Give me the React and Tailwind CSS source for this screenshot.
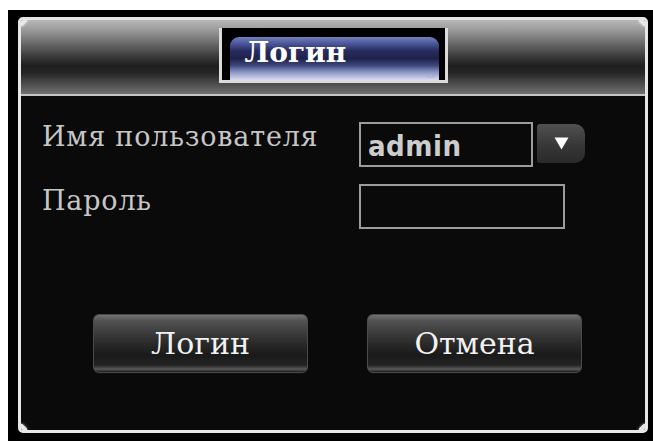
import React from "react";

const serif = { fontFamily: '"DejaVu Serif", "Liberation Serif", serif' };
const sans = { fontFamily: '"DejaVu Sans Condensed", "DejaVu Sans", "Liberation Sans", sans-serif' };

function Bolt({ className }) {
  return (
    <div
      className={`absolute w-[9px] h-[9px] rotate-45 rounded-[2px] bg-[#e8e8e8] shadow-[0_0_3px_rgba(255,255,255,0.7)] ${className}`}
    />
  );
}

function PanelButton({ children }) {
  return (
    <button
      className="w-[215px] h-[59px] rounded-[6px] border border-[#4a4a4a] text-[30px] leading-[34px] text-[#f2f2f2] bg-[linear-gradient(to_bottom,#727272_0%,#525252_10%,#2e2e2e_45%,#1a1a1a_70%,#232323_88%,#5a5a5a_95%,#1c1c1c_100%)] shadow-[0_1px_0_#111]"
      style={serif}
    >
      {children}
    </button>
  );
}

export default function App() {
  return (
    <div className="w-[653px] h-[441px] bg-white pl-[8px] pt-[10px] flex">
      <div className="flex-1 bg-black pl-[10px] pt-[7px] pr-[5px] pb-[8px] flex">
        <div className="relative flex-1 flex flex-col border-[3px] border-[#e6e6e6] rounded-[5px] overflow-hidden bg-[#0a0a0a]">
          {/* title bar */}
          <div className="h-[76px] shrink-0 flex justify-center pt-[8px] border-b-2 border-[#c4c4c4] bg-[linear-gradient(to_bottom,#b8b8b8_0%,#9e9e9e_12%,#6e6e6e_30%,#383838_50%,#1e1e1e_62%,#262626_72%,#4c4c4c_86%,#707070_100%)]">
            <div className="w-[229px] h-[55px] bg-black border-x-[3px] border-b-[3px] border-[#dcdcdc] pl-[8px] pr-[6px] pt-[9px] flex">
              <div className="relative flex-1 rounded-t-[9px] bg-[linear-gradient(to_bottom,#7280bc_0%,#4e5a9e_14%,#282c5e_32%,#1e224a_50%,#3c467a_66%,#8c96c6_82%,#d8dcee_100%)] pl-[15px] pt-[1px]">
                <span
                  className="block text-[28px] leading-[30px] font-bold text-white"
                  style={serif}
                >
                  Логин
                </span>
                <span className="absolute right-[5px] bottom-[2px] text-[8px] leading-none text-[#9aa0b8]">
                  ◡
                </span>
              </div>
            </div>
          </div>

          {/* form */}
          <div className="flex-1 flex flex-col pt-[26px] pl-[21px]">
            <div className="flex items-start">
              <span
                className="w-[317px] text-[27px] leading-[30px] tracking-[0.8px] text-[#c6c6c6]"
                style={serif}
              >
                Имя пользователя
              </span>
              <div className="w-[174px] h-[45px] border-2 border-[#9c9c9c] pl-[7px] pt-[3px] flex items-center">
                <span
                  className="text-[29px] leading-none font-bold text-[#cccccc] tracking-[0.5px]"
                  style={sans}
                >
                  admin
                </span>
              </div>
              <div className="ml-[4px] mt-[2px] w-[48px] h-[39px] rounded-l-[3px] rounded-r-[10px] bg-[linear-gradient(to_bottom,#505050,#353535_60%,#2a2a2a)] flex items-center justify-center">
                <svg width="15" height="13" viewBox="0 0 15 13">
                  <path d="M0.5 0.5 H14.5 L7.5 12.5 Z" fill="#ffffff" />
                </svg>
              </div>
            </div>

            <div className="flex items-start mt-[17px]">
              <span
                className="w-[317px] mt-[2px] text-[27px] leading-[30px] tracking-[0.8px] text-[#c6c6c6]"
                style={serif}
              >
                Пароль
              </span>
              <div className="w-[206px] h-[45px] border-2 border-[#9c9c9c]" />
            </div>

            <div className="flex mt-[85px] pl-[51px] gap-[59px]">
              <PanelButton>Логин</PanelButton>
              <PanelButton>Отмена</PanelButton>
            </div>
          </div>

          <Bolt className="left-[-4px] top-[-4px]" />
          <Bolt className="right-[-4px] top-[-4px]" />
          <Bolt className="left-[-4px] bottom-[-4px]" />
          <Bolt className="right-[-4px] bottom-[-4px]" />
        </div>
      </div>
    </div>
  );
}
